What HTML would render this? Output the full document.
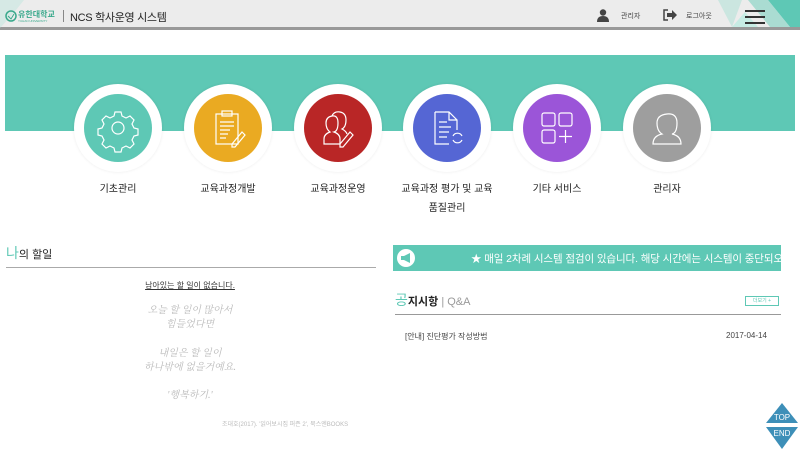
<!DOCTYPE html><html><head><meta charset="utf-8"><style>
*{margin:0;padding:0;box-sizing:border-box}
body{width:800px;height:452px;background:#fff;font-family:"Liberation Sans","Noto Sans CJK KR",sans-serif;position:relative;overflow:hidden;color:#333}
.hd{position:absolute;left:0;top:0;width:800px;height:30px;background:#ececec;border-bottom:3px solid #999}
.a{position:absolute}
.band{position:absolute;left:5px;top:55px;width:790px;height:76px;background:#5ec8b5}
.c{position:absolute;width:88px;height:88px;border-radius:50%;background:#fff;box-shadow:0 0 3px rgba(0,0,0,.08)}
.c div{position:absolute;left:10px;top:10px;width:68px;height:68px;border-radius:50%}
.c svg{position:absolute;left:0;top:0}
.lb{position:absolute;font-size:10px;color:#222;text-align:center;width:110px;line-height:19px}
.g{color:#bbb;font-style:italic;font-family:"Liberation Serif","Noto Serif CJK SC",serif;font-size:10px;text-align:center;position:absolute;left:5px;width:370px;line-height:14px}
</style></head><body>
<div class="hd"></div>
<svg class="a" style="left:0;top:0" width="30" height="30"><polygon points="0,0 24,0 12,15 0,28" fill="#bfe6dd" opacity=".5"/></svg>
<svg class="a" style="left:690px;top:0" width="110" height="30"><polygon points="28,0 52,0 42,27" fill="#b5e3d9" opacity=".6"/><polygon points="78,0 110,0 110,27 100,27" fill="#5ec8b5"/><polygon points="58,0 78,0 100,27 80,27" fill="#8fd6c7" opacity=".7"/><polygon points="42,27 55,12 68,27" fill="#c7ece4"/></svg>
<svg class="a" style="left:5px;top:10px" width="12" height="12"><circle cx="6" cy="6" r="5" fill="none" stroke="#3aa98c" stroke-width="1.5"/><path d="M3 6l3 3 3-5" stroke="#3aa98c" fill="none"/></svg>
<div class="a" style="left:18px;top:9px;font-size:8px;font-weight:bold;color:#3aa98c">유한대학교</div>
<div class="a" style="left:18px;top:19px;font-size:3px;color:#3aa98c">YUHAN UNIVERSITY</div>
<div class="a" style="left:63px;top:10px;width:1px;height:12px;background:#888"></div>
<div class="a" style="left:70px;top:9px;font-size:11px;color:#222;letter-spacing:-0.3px">NCS 학사운영 시스템</div>
<svg class="a" style="left:597px;top:9px" width="12" height="13"><circle cx="6" cy="3.5" r="3.2" fill="#444"/><path d="M0 13 Q0 7 6 7 Q12 7 12 13Z" fill="#444"/></svg>
<div class="a" style="left:621px;top:11px;font-size:7px;color:#444">관리자</div>
<svg class="a" style="left:663px;top:9px" width="14" height="12"><path d="M5 1H1v10h4" stroke="#444" fill="none" stroke-width="1.5"/><path d="M4 4h5V1l5 5-5 5V8H4z" fill="#444"/></svg>
<div class="a" style="left:686px;top:11px;font-size:7px;color:#444">로그아웃</div>
<svg class="a" style="left:745px;top:10px" width="20" height="14"><path d="M0 1h20M0 7h20M0 13h20" stroke="#333" stroke-width="2"/></svg>
<div class="band"></div>
<div class="c" style="left:74px;top:84px"><div style="background:#5ec8b5"></div><svg width="88" height="88" fill="none" stroke="#fff" stroke-width="1.2"><circle cx="44" cy="44" r="6"/><path d="M41 28h6l1 4 4 2 4-2 4 4-2 4 2 4 4 1v6l-4 1-2 4 2 4-4 4-4-2-4 2-1 4h-6l-1-4-4-2-4 2-4-4 2-4-2-4-4-1v-6l4-1 2-4-2-4 4-4 4 2 4-2z"/></svg></div>
<div class="c" style="left:184px;top:84px"><div style="background:#eaaa22"></div><svg width="88" height="88" fill="none" stroke="#fff" stroke-width="1.2"><rect x="32" y="30" width="22" height="30"/><rect x="38" y="27" width="10" height="5"/><path d="M36 38h14M36 42h14M36 46h10M36 50h8M36 54h6"/><path d="M48 60l10-12 3 3-10 12h-3z"/></svg></div>
<div class="c" style="left:294px;top:84px"><div style="background:#b92626"></div><svg width="88" height="88" fill="none" stroke="#fff" stroke-width="1.2"><path d="M30 60v-5q0-5 6-7-4-3-4-9t6-7 6 7-4 9q6 2 6 7v5z"/><path d="M38 32q2-5 8-4t6 8-4 9q4 2 5 5"/><path d="M46 60l10-12 3 3-10 12h-3z"/></svg></div>
<div class="c" style="left:403px;top:84px"><div style="background:#5566d4"></div><svg width="88" height="88" fill="none" stroke="#fff" stroke-width="1.2"><path d="M32 28h14l8 8v10M46 28v8h8M32 28v32h14"/><path d="M36 38h8M36 43h12M36 48h10M36 53h8"/><path d="M50 52a5 5 0 0 1 9 0M59 56a5 5 0 0 1-9 0"/></svg></div>
<div class="c" style="left:513px;top:84px"><div style="background:#9b55d8"></div><svg width="88" height="88" fill="none" stroke="#fff" stroke-width="1.2"><rect x="29" y="29" width="13" height="13" rx="2"/><rect x="46" y="29" width="13" height="13" rx="2"/><rect x="29" y="46" width="13" height="13" rx="2"/><path d="M52.5 46v13M46 52.5h13"/></svg></div>
<div class="c" style="left:623px;top:84px"><div style="background:#9e9e9e"></div><svg width="88" height="88" fill="none" stroke="#fff" stroke-width="1.2"><path d="M30 60q0-8 9-10-5-3-5-11t10-9 10 9-5 11q9 2 9 10z"/></svg></div>
<div class="lb" style="left:63px;top:180px">기초관리</div>
<div class="lb" style="left:173px;top:180px">교육과정개발</div>
<div class="lb" style="left:283px;top:180px">교육과정운영</div>
<div class="lb" style="left:392px;top:180px">교육과정 평가 및 교육<br>품질관리</div>
<div class="lb" style="left:502px;top:180px">기타 서비스</div>
<div class="lb" style="left:612px;top:180px">관리자</div>
<div class="a" style="left:6px;top:243px;font-size:11px;color:#222"><span style="color:#5ec8b5;font-size:14px">나</span>의 할일</div>
<div class="a" style="left:6px;top:267px;width:370px;height:1px;background:#aaa"></div>
<div class="a" style="left:5px;top:280px;width:370px;text-align:center;font-size:8px;color:#333;text-decoration:underline">남아있는 할 일이 없습니다.</div>
<div class="g" style="top:304px">오늘 할 일이 많아서<br>힘들었다면</div>
<div class="g" style="top:347px">내일은 할 일이<br>하나밖에 없을거예요.</div>
<div class="g" style="top:389px">'행복하기.'</div>
<div class="a" style="left:222px;top:419px;font-size:6px;color:#bbb">조대호(2017). '읽어보시집 퍼즌 2', 북스엔BOOKS</div>
<div class="a" style="left:393px;top:245px;width:388px;height:26px;background:#5ec8b5;overflow:hidden;white-space:nowrap">
<svg class="a" style="left:4px;top:4px" width="18" height="18"><circle cx="9" cy="9" r="9" fill="#fff"/><path d="M4 7h3l6-3v10l-6-3H4z" fill="#5ec8b5"/></svg>
<div class="a" style="left:78px;top:6px;font-size:10.5px;color:#fff;letter-spacing:-0.1px">★ 매일 2차례 시스템 점검이 있습니다. 해당 시간에는 시스템이 중단되오</div></div>
<div class="a" style="left:395px;top:290px;font-size:11px;font-weight:bold;color:#222"><span style="color:#5ec8b5;font-size:14px;font-weight:normal">공</span>지시항 <span style="color:#999;font-weight:normal">| Q&amp;A</span></div>
<div class="a" style="left:745px;top:296px;width:34px;height:10px;border:1px solid #5ec8b5;font-size:5px;color:#5ec8b5;text-align:center;line-height:8px">더보기 +</div>
<div class="a" style="left:395px;top:314px;width:386px;height:1px;background:#999"></div>
<div class="a" style="left:405px;top:331px;font-size:8px;color:#444">[안내] 진단평가 작성방법</div>
<div class="a" style="left:726px;top:331px;font-size:8px;color:#444">2017-04-14</div>
<svg class="a" style="left:766px;top:403px" width="32" height="46"><polygon points="16,0 32,20 0,20" fill="#3d8fb8"/><polygon points="0,24 32,24 16,46" fill="#3d8fb8"/><text x="16" y="17" font-size="8" fill="#fff" text-anchor="middle" font-family="Liberation Sans">TOP</text><text x="16" y="33" font-size="8" fill="#fff" text-anchor="middle" font-family="Liberation Sans">END</text></svg>
</body></html>
